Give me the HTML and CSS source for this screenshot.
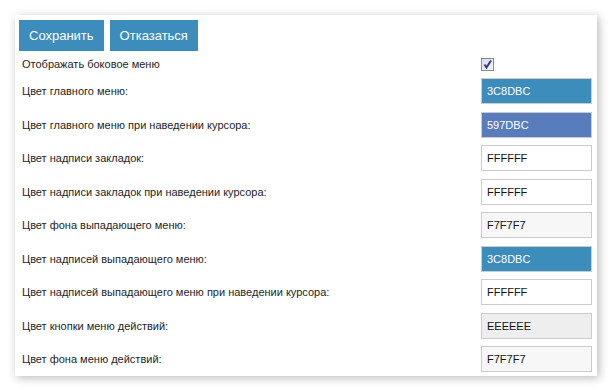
FILE: index.html
```html
<!DOCTYPE html>
<html lang="ru">
<head>
<meta charset="UTF-8" />
<title>Настройки меню</title>
<link rel="stylesheet" href="styles.css">
</head>
<body>

<div class="panel">
  <div class="actions">
    <button class="btn">Сохранить</button>
    <button class="btn">Отказаться</button>
  </div>

  <div class="rows">
    <div class="row row-check">
      <label>Отображать боковое меню</label>
      <span class="check">
        <svg width="11" height="11" viewBox="0 0 11 11"><path d="M2.5 5.5 L4.5 8.5 L9 1.5" fill="none" stroke="#2b3a8f" stroke-width="2"/></svg>
      </span>
    </div>
    <div class="row">
      <label>Цвет главного меню:</label>
      <input class="color c-blue" type="text" value="3C8DBC">
    </div>
    <div class="row">
      <label>Цвет главного меню при наведении курсора:</label>
      <input class="color c-violet" type="text" value="597DBC">
    </div>
    <div class="row">
      <label>Цвет надписи закладок:</label>
      <input class="color" type="text" value="FFFFFF">
    </div>
    <div class="row">
      <label>Цвет надписи закладок при наведении курсора:</label>
      <input class="color" type="text" value="FFFFFF">
    </div>
    <div class="row">
      <label>Цвет фона выпадающего меню:</label>
      <input class="color c-f7" type="text" value="F7F7F7">
    </div>
    <div class="row">
      <label>Цвет надписей выпадающего меню:</label>
      <input class="color c-blue" type="text" value="3C8DBC">
    </div>
    <div class="row">
      <label>Цвет надписей выпадающего меню при наведении курсора:</label>
      <input class="color" type="text" value="FFFFFF">
    </div>
    <div class="row">
      <label>Цвет кнопки меню действий:</label>
      <input class="color c-ee" type="text" value="EEEEEE">
    </div>
    <div class="row">
      <label>Цвет фона меню действий:</label>
      <input class="color c-f7" type="text" value="F7F7F7">
    </div>
  </div>
</div>

</body>
</html>
```

FILE: styles.css
```css
body {
  margin: 0;
  padding: 15px 0 16px 15px;
  min-height: 392px;
  box-sizing: border-box;
  background: #fff;
  font-family: "Liberation Sans", Arial, sans-serif;
  color: #222;
}
.panel {
  width: 573px;
  padding: 5px 5px 4px 4px;
  background: #fff;
  box-shadow: 2px 2px 9px rgba(0,0,0,0.28);
}
/* Buttons */
.actions {
  display: flex;
  gap: 6px;
  margin-bottom: 6.5px;
}
.btn {
  height: 31px;
  margin: 0;
  padding: 0 10px;
  border: none;
  background: #3c8dbc;
  color: #fff;
  font-family: inherit;
  font-size: 13px;
}
/* Rows */
.rows {
  display: flex;
  flex-direction: column;
  gap: 7.5px;
}
.row {
  display: flex;
  align-items: center;
  justify-content: space-between;
}
.row label {
  padding-left: 3px;
  font-size: 11px;
  color: #1e1e1e;
}
.row-check {
  height: 13px;
  padding-right: 98px;
}
.check {
  width: 11px;
  height: 11px;
  border: 1px solid #8a8a8a;
  background: linear-gradient(135deg, #d9dcef, #f4f5fb);
  display: flex;
}
.color {
  box-sizing: border-box;
  width: 111px;
  height: 26px;
  margin: 0;
  padding: 0 5px;
  border: 1px solid #ccc;
  background: #fff;
  color: #111;
  font-family: inherit;
  font-size: 11px;
  outline: none;
}
.c-blue { background: #3c8dbc; color: #fff; }
.c-violet { background: #597dbc; color: #fff; }
.c-f7 { background: #f7f7f7; }
.c-ee { background: #eeeeee; }
```
